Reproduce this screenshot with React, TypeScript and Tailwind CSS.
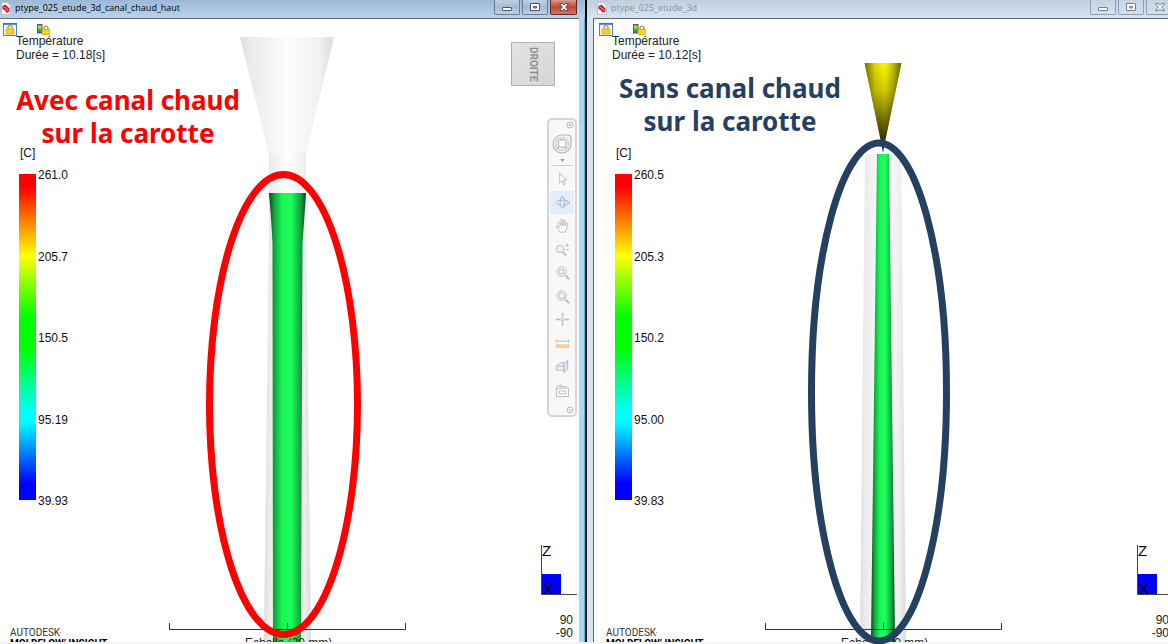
import type { ReactNode } from "react";
import clsx from "clsx";

type ResultWindowProps = {
  title: string;
  active?: boolean;
  duration: string;
  scaleLabels: string[];
  note: ReactNode;
  noteClassName: string;
  model: ReactNode;
  annotation: ReactNode;
  children?: ReactNode;
};

export default function App() {
  return (
    <main className="min-h-screen overflow-hidden bg-[#f4f4f4] font-['Liberation_Sans',Arial,sans-serif] text-black">
      <div className="-mr-[15px] -ml-[9px] flex h-screen pb-[2px]">
        <ResultWindow
          active
          title="ptype_025_etude_3d_canal_chaud_haut"
          duration="10.18[s]"
          scaleLabels={["261.0", "205.7", "150.5", "95.19", "39.93"]}
          note={
            <>
              Avec canal chaud
              <br />
              sur la carotte
            </>
          }
          noteClassName="pt-[22px] pl-[10px] text-[#ff0000]"
          model={<HotRunnerModel />}
          annotation={
            <ellipse cx="285.5" cy="385.5" rx="74" ry="230" stroke="#ff0000" />
          }
        >
          <ViewCube />
          <NavigationBar />
        </ResultWindow>

        <ResultWindow
          title="ptype_025_etude_3d"
          duration="10.12[s]"
          scaleLabels={["260.5", "205.3", "150.2", "95.00", "39.83"]}
          note={
            <>
              Sans canal chaud
              <br />
              sur la carotte
            </>
          }
          noteClassName="pt-[10px] pl-[16px] text-[#264061]"
          model={<ColdRunnerModel />}
          annotation={
            <ellipse cx="285" cy="373" rx="67.5" ry="249" stroke="#264061" />
          }
        />
      </div>
    </main>
  );
}

function ResultWindow({
  title,
  active = false,
  duration,
  scaleLabels,
  note,
  noteClassName,
  model,
  annotation,
  children,
}: ResultWindowProps) {
  return (
    <section
      className={clsx(
        "flex min-w-0 flex-1 flex-col border-r-2 border-black",
        active ? "bg-[#b9d1ea]" : "bg-[#d7e4f2]",
      )}
    >
      <header
        className={clsx(
          "flex h-[18px] shrink-0 items-start justify-between bg-linear-to-b pr-[8px] pl-[10px]",
          active ? "from-[#9db8d6] to-[#bdd3ea]" : "from-[#c0cfdf] to-[#d6e4f2]",
        )}
      >
        <div className="flex items-center gap-[4px] pt-[1px]">
          <ModelIcon />
          <h1
            className={clsx(
              "font-['Open_Sans',sans-serif] text-[9px] leading-[14px] whitespace-nowrap",
              active ? "text-black" : "text-[#8b939c]",
            )}
          >
            {title}
          </h1>
        </div>
        <div className="flex gap-[2px]">
          <CaptionButton label="Réduire" active={active}>
            <rect x="8.500" y="7.500" width="9" height="3" rx="0.500" />
          </CaptionButton>
          <CaptionButton label="Agrandir" active={active}>
            <path d="M8.500 3.500h9v7h-9zM11.500 6.500v1.500h3v-1.500z" fillRule="evenodd" />
          </CaptionButton>
          <CaptionButton label="Fermer" active={active} close>
            <path d="M8.500 3.500h3l1.500 1.700 1.500-1.700h3l-2.800 3.500 2.800 3.500h-3l-1.500-1.700-1.500 1.700h-3l2.800-3.500z" />
          </CaptionButton>
        </div>
      </header>

      <div
        className={clsx(
          "flex min-h-0 flex-1 border-r pl-[6px] pr-[5px]",
          active ? "border-[#2bc4ee]" : "border-[#d7e4f2]",
        )}
      >
        <div className="relative flex min-w-0 flex-1 border-t border-l border-[#666]">
          <div className="relative flex min-w-0 flex-1 justify-between overflow-hidden bg-white">
            <Scene>{model}</Scene>

            <div className="relative flex flex-col">
              <div className="flex h-[15px] gap-[20px] pt-[4px] pl-[5px]">
                <LockIcon />
                <LegendLockIcon />
              </div>
              <p className="pl-[18px] text-[12px] leading-[14px] whitespace-nowrap text-[#222]">
                Température
                <br />
                Durée = {duration}
              </p>
              <div className={clsx("h-[84px]", noteClassName)}>
                <h2 className="w-60 text-center font-['Trebuchet_MS','Noto_Sans',sans-serif] text-[26px] leading-[33px] font-bold whitespace-nowrap">
                  {note}
                </h2>
              </div>
              <ColorScale labels={scaleLabels} />
              <p className="mt-auto -mb-[7px] pl-[12px] font-['Roboto',sans-serif] text-[10px] leading-[10px] text-[#333]">
                AUTODESK<span className="text-[6px]">’</span>
                <br />
                <b className="text-black">MOLDFLOW’ INSIGHT</b>
              </p>
            </div>

            <div className="relative flex flex-col items-end">
              {children}
              <AxisTriad />
              <p className="mt-[18px] mr-[6px] mb-[2px] text-right text-[12px] leading-[13px] text-[#222]">
                90
                <br />
                -90
              </p>
            </div>
          </div>

          <svg
            viewBox="0 0 581 623"
            preserveAspectRatio="xMidYMin meet"
            className="pointer-events-none absolute inset-0 h-full w-full overflow-visible"
            fill="none"
            strokeWidth="7"
          >
            {annotation}
          </svg>
        </div>
      </div>
    </section>
  );
}

function CaptionButton({
  label,
  active,
  close = false,
  children,
}: {
  label: string;
  active: boolean;
  close?: boolean;
  children: ReactNode;
}) {
  return (
    <button
      type="button"
      aria-label={label}
      className={clsx(
        "flex h-[15px] justify-center rounded-b-[2px] border border-t-0 bg-linear-to-b",
        close ? "w-[27px]" : "w-[26px]",
        !active && "border-[#8e9dba] from-[#c5d2e1] to-[#d3e0ee]",
        active && !close && "border-[#66799a] from-[#c0d0e4] via-[#a4bad4] to-[#bdd3ea]",
        active && close && "border-[#5c2630] from-[#dc9a8c] via-[#c2452f] to-[#d4755c]",
      )}
    >
      <svg
        viewBox="0 0 26 15"
        className="h-[15px] w-[26px] shrink-0"
        fill="#ffffff"
        stroke={active ? "#4c5468" : "#777f92"}
        strokeWidth="1"
      >
        {children}
      </svg>
    </button>
  );
}

function ModelIcon() {
  return (
    <svg viewBox="0 0 10 13" className="h-[13px] w-[10px]">
      <path d="M0.500 0.500h6l3 3v9h-9z" fill="#f4f6fa" stroke="#b9c0cc" />
      <path d="M1.500 4l3-1.500 4 4v3l-2.500 1.500-2-2.500-2.500-1.500z" fill="#c2243c" />
      <path d="M3 5l3 2 1 2" stroke="#ef8c98" fill="none" />
    </svg>
  );
}

function Padlock() {
  return (
    <>
      <path d="M2.500 4.500v-2a2 2 0 0 1 4 0v2" fill="none" stroke="#a98d2c" strokeWidth="1.200" />
      <rect x="0.500" y="4" width="8" height="5" rx="0.500" fill="#ffd21c" stroke="#d9a400" strokeWidth="0.800" />
    </>
  );
}

function LockIcon() {
  return (
    <svg viewBox="0 0 14 13" className="h-[13px] w-[14px]">
      <rect x="0.500" y="0.500" width="13" height="12" fill="#eef5ff" stroke="#4a86cf" />
      <path d="M0 1h14" stroke="#2f6dc0" strokeWidth="1.500" />
      <g transform="translate(2.500 2)">
        <Padlock />
      </g>
    </svg>
  );
}

function LegendLockIcon() {
  return (
    <svg viewBox="0 0 13 13" className="h-[13px] w-[13px]">
      <defs>
        <linearGradient id="mini-scale" x2="0" y2="1">
          <stop offset="0" stopColor="#f04020" />
          <stop offset="0.300" stopColor="#f0e020" />
          <stop offset="0.600" stopColor="#20c850" />
          <stop offset="1" stopColor="#1060f0" />
        </linearGradient>
      </defs>
      <rect x="0.500" y="1.500" width="4.500" height="8.500" fill="url(#mini-scale)" stroke="#45607a" />
      <g transform="translate(4.500 2.500)">
        <Padlock />
      </g>
    </svg>
  );
}

function ColorScale({ labels }: { labels: string[] }) {
  return (
    <figure className="text-[12px] leading-[14px] text-[#111]">
      <figcaption className="pl-[22px]">[C]</figcaption>
      <div className="mt-[8px] flex gap-[2px] pl-[21px]">
        <div className="mt-[6px] h-[326px] w-[17px] bg-[linear-gradient(to_bottom,#ff0000_0%,#ff0000_4%,#ffff00_25%,#00ff00_44%,#00ff00_53%,#00ffff_73%,#00ffff_76%,#0000ff_95%,#0000ff_100%)]" />
        <ul className="flex h-[340px] flex-col justify-between">
          {labels.map((label) => (
            <li key={label}>{label}</li>
          ))}
        </ul>
      </div>
    </figure>
  );
}

function AxisTriad() {
  return (
    <svg viewBox="0 0 38 51" className="mt-auto h-[51px] w-[38px] overflow-visible">
      <rect x="0" y="29" width="20" height="20" fill="#0000ff" />
      <path d="M0.500 0v49.500H36" fill="none" stroke="#444" />
      <text x="1" y="11" fontSize="15">
        Z
      </text>
      <text x="2" y="49" fontSize="15">
        X
      </text>
    </svg>
  );
}

function Scene({ children }: { children: ReactNode }) {
  return (
    <svg
      viewBox="0 0 581 623"
      preserveAspectRatio="xMidYMin meet"
      className="absolute inset-0 h-full w-full"
    >
      <defs>
        <linearGradient id="shell">
          <stop offset="0" stopColor="#dcdcdc" />
          <stop offset="0.100" stopColor="#eaeaea" />
          <stop offset="0.500" stopColor="#fdfdfd" />
          <stop offset="0.850" stopColor="#f0f0f0" />
          <stop offset="1" stopColor="#dcdcdc" />
        </linearGradient>
        <linearGradient id="melt">
          <stop offset="0" stopColor="#04401a" />
          <stop offset="0.120" stopColor="#0c9c38" />
          <stop offset="0.350" stopColor="#18f556" />
          <stop offset="0.600" stopColor="#1cff5c" />
          <stop offset="0.880" stopColor="#0d9a3a" />
          <stop offset="1" stopColor="#043c18" />
        </linearGradient>
        <linearGradient id="cone-hue" x2="0" y2="1">
          <stop offset="0" stopColor="#fcf800" />
          <stop offset="0.300" stopColor="#d4ce00" />
          <stop offset="0.600" stopColor="#7c7800" />
          <stop offset="1" stopColor="#0c0c00" />
        </linearGradient>
        <linearGradient id="cone-shade">
          <stop offset="0" stopColor="#000" stopOpacity="0.550" />
          <stop offset="0.300" stopColor="#000" stopOpacity="0.100" />
          <stop offset="0.550" stopColor="#000" stopOpacity="0" />
          <stop offset="0.750" stopColor="#000" stopOpacity="0.200" />
          <stop offset="1" stopColor="#000" stopOpacity="0.600" />
        </linearGradient>
      </defs>
      {children}
      <path d="M171.500 604v6.500h236v-6.500M289.500 604v6.500" fill="none" stroke="#333" />
      <text x="247" y="628" fontSize="12" fill="#222">
        Echelle (20 mm)
      </text>
    </svg>
  );
}

function HotRunnerModel() {
  return (
    <>
      <path d="M242 18h94l-28 116v80l5 409h-47l5-409v-80z" fill="#f4f4f4" />
      <path d="M242 18h94l-28 116h-37z" fill="url(#shell)" />
      <path d="M271 134h37v80l5 409h-47l5-409z" fill="url(#shell)" />
      <path d="M271 174h37q-2 30-3.500 50l-1.500 399h-28l-0.500-399q-1-20-3.500-50z" fill="url(#melt)" />
    </>
  );
}

function ColdRunnerModel() {
  return (
    <>
      <path d="M271 135h36l5 488h-46z" fill="url(#shell)" />
      <path d="M283 135h12l6 488h-24z" fill="url(#melt)" />
      <path d="M270.500 44h37l-17.500 84-1 6-1-6z" fill="url(#cone-hue)" />
      <path d="M270.500 44h37l-17.500 84-1 6-1-6z" fill="url(#cone-shade)" />
    </>
  );
}

function ViewCube() {
  return (
    <button
      type="button"
      className="mt-[23px] mr-[24px] flex size-[44px] items-center justify-center border border-[#b0b0b0] bg-linear-to-br from-[#e3e3e3] to-[#d6d6d6] font-['Roboto',sans-serif] text-[10px] font-bold text-[#8b9096] [writing-mode:vertical-rl]"
    >
      DROITE
    </button>
  );
}

const lens = (
  <>
    <circle cx="7" cy="7" r="5" fill="#f0f3f5" />
    <path d="M11 11l4 4" strokeWidth="2" />
  </>
);

const tools: { label: string; icon: ReactNode; selected?: boolean }[] = [
  { label: "Sélectionner", icon: <path d="M5 2v11l2.500-2.500 2 4.500 1.500-1-2-4h3.500z" fill="#fff" /> },
  {
    label: "Orbite",
    selected: true,
    icon: (
      <>
        <ellipse cx="8" cy="8" rx="2.500" ry="6" />
        <path d="M6 11c-3-.5-4.500-1.500-4.500-3S4 5.500 8 5.500s6.500 1 6.500 2.500-1.500 2.500-4 3M8 9.500l2.500 1.500-2.500 2M6 3.500l2-2 2 2M13 7l1.500 2L16 7" />
      </>
    ),
  },
  {
    label: "Panoramique",
    icon: (
      <path
        d="M5 15c-.5-2-3-4-3.500-5.500.5-1.500 2-.5 3 .8L3.500 5c0-1.500 1.500-1.500 2 0L6.500 8V2.500c.2-1.500 1.600-1.500 1.800 0V8l1-5c.5-1.300 1.700-1 1.600.3L10.500 8.500l1.700-3c.8-1 2-.3 1.500.8-1 2.700-1 6-2.700 8.700z"
        fill="#fff"
      />
    ),
  },
  {
    label: "Zoom",
    icon: (
      <>
        <circle cx="5.500" cy="7.500" r="4" fill="#f0f3f5" />
        <path d="M8.500 11l3.500 3.500" strokeWidth="2" />
        <path d="M11 3.500h4M13 1.500v4M11 8h4" />
      </>
    ),
  },
  { label: "Zoom fenêtre", icon: <>{lens}<rect x="5" y="5" width="4" height="4" fill="#fff" /></> },
  { label: "Zoom tout", icon: <>{lens}<path d="M5 4.500h3l1.500 1.500v3.500H5z" fill="#fff" /></> },
  {
    label: "Centrer",
    icon: (
      <>
        <path d="M8 1v4.500M8 10.500V15M1 8h4.500M10.500 8H15" strokeWidth="1.500" />
        <circle cx="8" cy="8" r="1.500" stroke="#8dbbe4" />
      </>
    ),
  },
  {
    label: "Mesurer",
    icon: (
      <>
        <path d="M1 5.500h14M1.500 4v3M14.500 4v3" />
        <rect x="1.500" y="9.500" width="13" height="2.500" fill="#fbdca8" stroke="#efc07c" />
      </>
    ),
  },
  {
    label: "Plan de coupe",
    icon: (
      <>
        <path d="M1.500 7.500l4-3.500h4v8h-8zM1.500 7.500h7" fill="#eee" />
        <path d="M9.500 5l4-3.500v9l-4 4z" fill="#dcebf7" stroke="#8dbbe4" />
      </>
    ),
  },
  {
    label: "Capture",
    icon: (
      <>
        <rect x="1.500" y="5.500" width="13" height="9" fill="#fff" />
        <rect x="4.500" y="8.500" width="7" height="3" />
        <path d="M2 4l5-2-1 2h7" />
      </>
    ),
  },
];

function NavigationBar() {
  return (
    <nav className="mt-[32px] mr-[2px] flex h-[299px] w-[30px] flex-col items-center rounded-[5px] border-2 border-[#d6d6d6] bg-[#f8f8f8] text-[#b9b9b9]">
      <svg viewBox="0 0 8 8" className="mt-px mr-px size-[8px] self-end" fill="none" stroke="currentColor">
        <circle cx="4" cy="4" r="3" />
        <path d="M2.800 2.800l2.400 2.400M5.200 2.800L2.800 5.200" />
      </svg>
      <button type="button" aria-label="Disque de navigation" className="mt-[5px] flex flex-col items-center">
        <svg viewBox="0 0 20 20" className="size-[20px]" fill="none" stroke="currentColor" strokeWidth="1.200">
          <path d="M10 1h6q3 0 3 3v6a9 9 0 1 1-9-9z" fill="#f1f1f1" />
          <circle cx="10" cy="10" r="6.500" stroke="#cccccc" />
          <circle cx="10" cy="9.500" r="3.800" fill="#fff" />
          <path d="M5.500 14.500l2-2M14.500 14.500l-2-2" />
        </svg>
        <svg viewBox="0 0 6 4" className="mt-[5px] h-[3px] w-[5px]" fill="#999">
          <path d="M0 0h6L3 4z" />
        </svg>
      </button>
      <div className="mt-[3px] h-px w-[22px] shrink-0 bg-[#cfcfcf]" />
      <div className="mt-[1px] flex h-[235px] flex-col justify-between">
        {tools.map((tool) => (
          <button
            key={tool.label}
            type="button"
            aria-label={tool.label}
            className={clsx(
              "flex h-[23px] w-[24px] items-center justify-center",
              tool.selected && "bg-[#e2eef8] text-[#9fb4c6]",
            )}
          >
            <svg viewBox="0 0 16 16" className="size-[15px]" fill="none" stroke="currentColor">
              {tool.icon}
            </svg>
          </button>
        ))}
      </div>
      <svg viewBox="0 0 8 8" className="mt-[4px] mr-px size-[8px] self-end" fill="none" stroke="currentColor">
        <circle cx="4" cy="4" r="3" />
        <path d="M2.500 4h3" />
      </svg>
    </nav>
  );
}
